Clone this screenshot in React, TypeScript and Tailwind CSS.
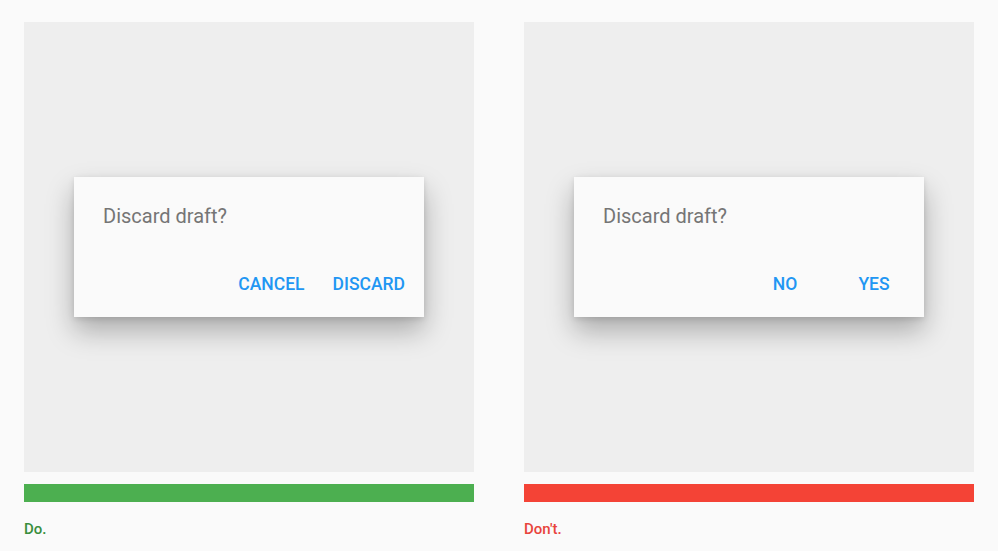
import React from 'react';

type Example = {
  actions: string[];
  barColor: string;
  label: string;
  labelColor: string;
  wide: boolean;
};

const examples: Example[] = [
  { actions: ['CANCEL', 'DISCARD'], barColor: 'bg-[#4caf50]', label: 'Do.', labelColor: 'text-[#388e3c]', wide: false },
  { actions: ['NO', 'YES'], barColor: 'bg-[#f44336]', label: "Don't.", labelColor: 'text-[#e8453c]', wide: true },
];

const DialogCard: React.FC<{ ex: Example }> = ({ ex }) => (
  <div className="flex flex-col w-[450px]">
    <div className="h-[450px] bg-[#eeeeee] flex items-start justify-center pt-[155px]">
      <div className="w-[350px] h-[140px] bg-[#fafafa] shadow-[0_14px_26px_rgba(0,0,0,0.28),0_2px_6px_rgba(0,0,0,0.12)] flex flex-col">
        <p className="pl-[29px] pt-[25px] text-[20px] leading-[28px] text-[#757575]">Discard draft?</p>
        {ex.wide ? (
          <div className="mt-auto mb-[23px] flex justify-end pr-[18px] gap-[25px]">
            {ex.actions.map((a) => (
              <button key={a} className="w-[64px] text-center text-[17.5px] leading-[20px] font-medium text-[#2196f3]">{a}</button>
            ))}
          </div>
        ) : (
          <div className="mt-auto mb-[23px] flex justify-end pr-[19px] gap-[28px]">
            {ex.actions.map((a) => (
              <button key={a} className="text-[17.5px] leading-[20px] font-medium text-[#2196f3]">{a}</button>
            ))}
          </div>
        )}
      </div>
    </div>
    <div className={`mt-[12px] h-[18px] ${ex.barColor}`} />
    <p className={`mt-[18px] text-[15px] leading-[18px] font-medium ${ex.labelColor}`}>{ex.label}</p>
  </div>
);

export default function App() {
  return (
    <div className="w-[998px] h-[551px] bg-[#fafafa] font-['Roboto',sans-serif] pt-[22px] pl-[24px] flex gap-[50px]">
      {examples.map((ex) => (
        <DialogCard key={ex.label} ex={ex} />
      ))}
    </div>
  );
}
